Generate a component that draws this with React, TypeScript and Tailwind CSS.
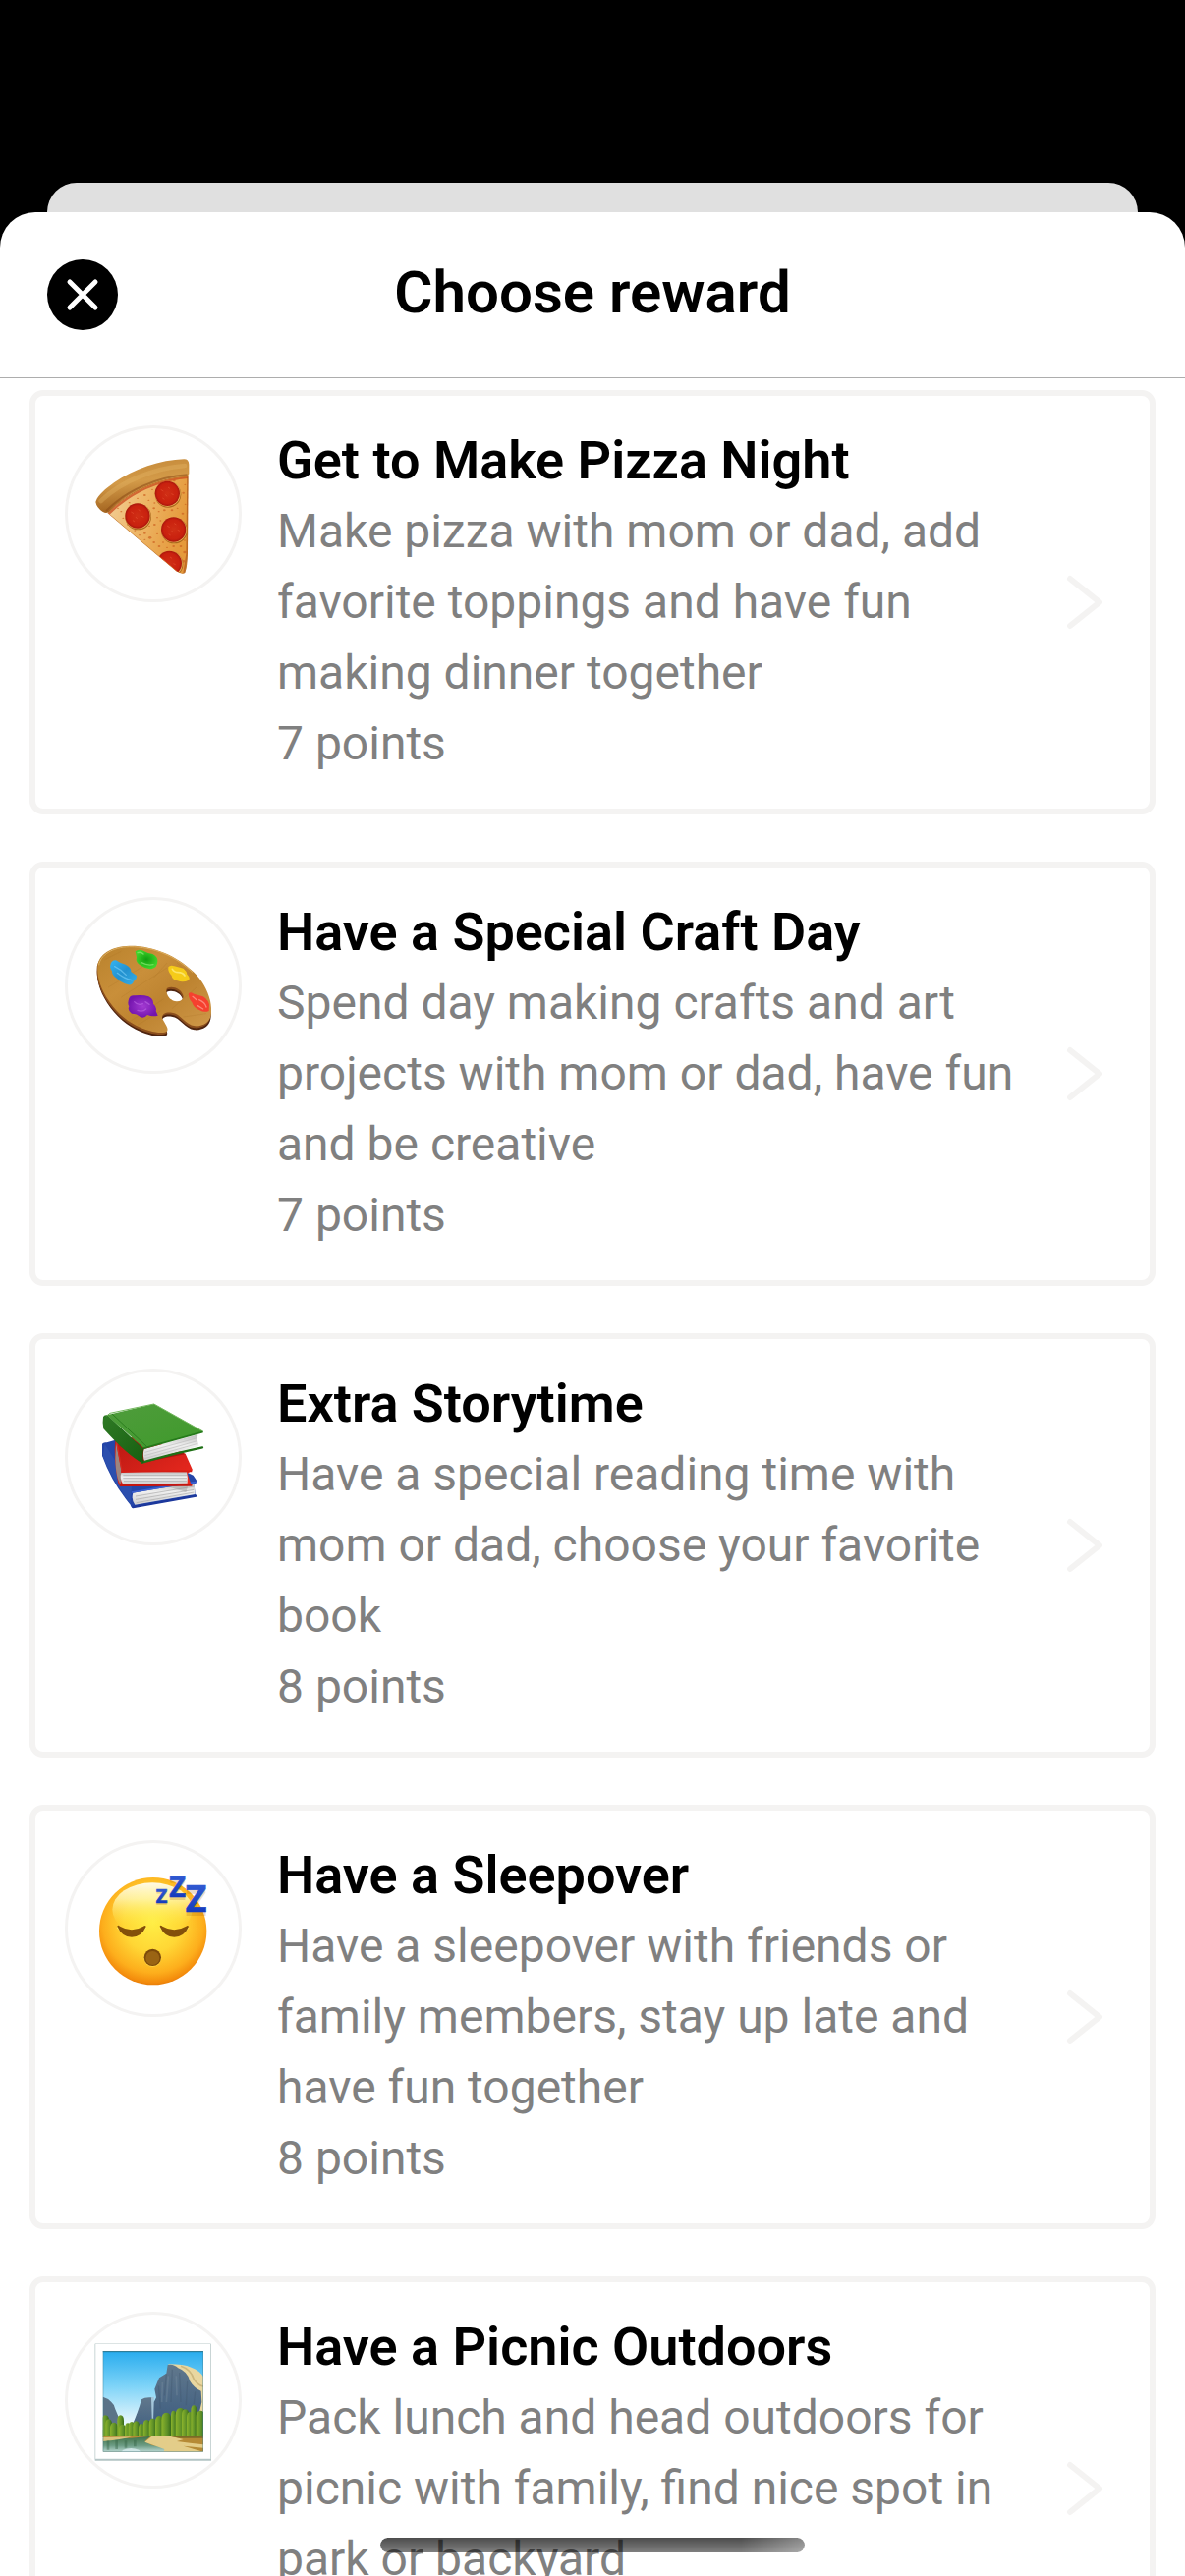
import type { ReactNode } from 'react';

const speckles: [number, number, number][] = [
  [285, 205, 3], [262, 222, 4], [274, 238, 3], [240, 232, 3], [215, 245, 3], [352, 178, 4], [385, 190, 3], [380, 215, 4],
  [290, 262, 4], [305, 272, 3], [322, 268, 4], [345, 268, 4], [362, 262, 3], [378, 278, 4], [300, 290, 3], [292, 312, 4],
  [310, 300, 3], [386, 250, 3], [262, 338, 4], [278, 352, 5], [290, 366, 4], [300, 340, 3], [318, 366, 3], [306, 378, 4],
  [262, 358, 3], [330, 382, 3], [350, 378, 4], [372, 378, 4], [384, 396, 5], [380, 424, 5], [376, 444, 3], [190, 272, 3],
  [196, 292, 3], [210, 312, 3], [232, 330, 3], [180, 262, 3], [292, 246, 3], [384, 360, 3], [246, 344, 3], [276, 316, 3],
];

const pepperoni: [number, number][] = [[331, 217], [240, 285], [350, 327], [337, 430]];

function PizzaArt() {
  return (
    <svg viewBox="27 18 522 522" className="size-full" aria-hidden="true">
      <defs>
        <linearGradient id="pz-cheese" x1="0" y1="0" x2="1" y2="0.3">
          <stop offset="0" stopColor="#f3d3a0" />
          <stop offset="0.5" stopColor="#eeb768" />
          <stop offset="1" stopColor="#e59a3c" />
        </linearGradient>
        <linearGradient id="pz-crust" x1="0.4" y1="0" x2="0.6" y2="1">
          <stop offset="0" stopColor="#c58a3a" />
          <stop offset="0.4" stopColor="#d39a48" />
          <stop offset="1" stopColor="#9a5a18" />
        </linearGradient>
        <radialGradient id="pz-pep">
          <stop offset="0" stopColor="#d03016" />
          <stop offset="0.8" stopColor="#c9210f" />
          <stop offset="1" stopColor="#a8160c" />
        </radialGradient>
        <clipPath id="pz-clip">
          <path d="M150 276C210 215 300 172 394 166L391 400Q390 440 383 458Q376 464 360 454Q260 370 150 276Z" />
        </clipPath>
      </defs>
      <path d="M148 276C210 210 300 168 395 162L393 400Q392 440 385 459Q376 465 358 454Q258 370 148 276Z" fill="#b8691f" />
      <g clipPath="url(#pz-clip)">
        <rect x="140" y="160" width="252" height="310" fill="url(#pz-cheese)" />
        <path d="M150 280C215 215 300 176 394 167" fill="none" stroke="#c84a1c" strokeWidth="8" opacity="0.75" />
        <path d="M394 165L391 400L382 460" fill="none" stroke="#a94c18" strokeWidth="6" opacity="0.6" />
        {speckles.map(([x, y, r]) => (
          <ellipse key={`${x}-${y}`} cx={x} cy={y} rx={r} ry={r - 1} fill="#cd6423" opacity="0.75" />
        ))}
        {pepperoni.map(([x, y]) => (
          <g key={x}>
            <circle cx={x + 2} cy={y + 3} r="40" fill="#a9681d" />
            <circle cx={x + 1} cy={y + 1} r="39" fill="#efb65c" />
            <circle cx={x} cy={y} r="38" fill="url(#pz-pep)" />
            <path d={`M${x - 20} ${y - 12}l8 5m14 -12l6 4m-14 18l5 6m13 -8l7 3m-34 10l6 4`} stroke="#e65232" strokeWidth="3" opacity="0.6" />
          </g>
        ))}
      </g>
      <path d="M112 243C118 222 140 205 168 184C228 142 310 114 382 112Q396 112 397 128V156Q396 165 384 165C300 170 210 214 158 268Q148 281 133 272Q115 260 112 243Z" fill="url(#pz-crust)" />
      <path d="M128 240C192 178 290 140 384 132" fill="none" stroke="#e6b768" strokeWidth="14" opacity="0.35" strokeLinecap="round" />
      <path d="M144 270C205 208 300 166 392 160" fill="none" stroke="#8b4a15" strokeWidth="6" opacity="0.55" />
    </svg>
  );
}

function PaletteArt() {
  const board =
    'M118 235C120 200 160 174 215 173C290 172 360 204 410 252C452 292 470 345 464 385C460 408 438 420 415 418C385 414 372 380 345 377C325 374 312 382 316 396C324 412 336 424 330 434C316 444 270 434 235 416C170 384 112 300 118 235ZM328 308C328 325 342 343 360 343C374 343 382 334 379 324C374 308 358 299 343 299C333 299 328 302 328 308Z';
  return (
    <svg viewBox="27 33 522 522" className="size-full" aria-hidden="true">
      <defs>
        <linearGradient id="pl-wood" x1="0" y1="0" x2="1" y2="1">
          <stop offset="0" stopColor="#b9822c" />
          <stop offset="0.35" stopColor="#c98f3a" />
          <stop offset="0.6" stopColor="#bd8330" />
          <stop offset="1" stopColor="#d19a4b" />
        </linearGradient>
        <linearGradient id="pl-blue" x1="0" y1="0" x2="1" y2="1">
          <stop offset="0" stopColor="#34b4f2" />
          <stop offset="0.5" stopColor="#2391cf" />
          <stop offset="1" stopColor="#37b0e8" />
        </linearGradient>
        <radialGradient id="pl-green">
          <stop offset="0" stopColor="#109e10" />
          <stop offset="1" stopColor="#3fd32b" />
        </radialGradient>
        <radialGradient id="pl-purple">
          <stop offset="0" stopColor="#a33ad2" />
          <stop offset="1" stopColor="#7415ae" />
        </radialGradient>
      </defs>
      <path d={board} fill="#4e2410" fillRule="evenodd" transform="translate(-1 12)" />
      <path d={board} fill="#8a4d1c" fillRule="evenodd" transform="translate(-2 6)" />
      <path d={board} fill="url(#pl-wood)" fillRule="evenodd" />
      <g stroke="#a56e22" strokeWidth="2" opacity="0.3" fill="none">
        <path d="M140 215L190 190M150 300L300 210M190 330L330 240M215 405L320 335M240 415L310 372M290 270L330 225M345 365L420 300M380 390L450 380M400 260L360 225" />
      </g>
      <path d="M122 232C126 202 162 177 215 176C290 175 358 206 408 254" fill="none" stroke="#dcae62" strokeWidth="3" />
      <path d="M157 232Q160 216 174 217Q186 226 203 230Q222 240 220 252L237 264Q238 276 228 281Q224 294 212 292Q190 286 178 274Q160 262 162 250Q154 240 157 232Z" fill="url(#pl-blue)" />
      <path d="M170 236Q190 246 205 262M178 256Q200 274 222 278" fill="none" stroke="#8bdcff" strokeWidth="4" opacity="0.5" strokeLinecap="round" />
      <path d="M233 190Q242 182 254 187Q270 196 286 198Q302 206 301 220Q300 240 284 243Q268 246 250 233Q232 224 237 208Z" fill="url(#pl-green)" />
      <path d="M240 194Q250 190 258 198M252 224Q270 234 288 230" fill="none" stroke="#99f280" strokeWidth="4" opacity="0.6" strokeLinecap="round" />
      <path d="M334 238Q340 230 352 235L380 242Q390 250 391 260Q402 270 396 278Q380 286 362 280Q344 276 344 264Q332 252 334 238Z" fill="#f5cb19" />
      <path d="M346 244Q352 254 364 254Q378 254 384 264" fill="none" stroke="#fff08a" strokeWidth="5" opacity="0.7" strokeLinecap="round" />
      <path d="M396 318Q404 312 412 320L440 328Q456 338 459 352L458 372Q444 378 430 370Q412 364 406 346Q394 332 396 318Z" fill="#f5402f" />
      <path d="M408 328L420 338M428 338Q446 346 450 360M424 356L440 366" fill="none" stroke="#ffa294" strokeWidth="4" opacity="0.7" strokeLinecap="round" />
      <path d="M214 334Q218 322 232 325Q256 322 274 328Q290 336 288 350Q300 360 296 372L302 386Q286 390 270 384Q260 396 248 390Q238 380 222 380Q208 370 214 358Q208 348 214 334Z" fill="url(#pl-purple)" />
      <path d="M230 344Q240 356 256 350M264 344L276 352M240 370Q256 376 266 366" fill="none" stroke="#cc7df0" strokeWidth="4" opacity="0.45" strokeLinecap="round" />
    </svg>
  );
}

function BooksArt() {
  return (
    <svg viewBox="27 33 522 522" className="size-full" aria-hidden="true">
      <defs>
        <linearGradient id="bk-green" x1="0" y1="0" x2="1" y2="1">
          <stop offset="0" stopColor="#4f9c3c" />
          <stop offset="1" stopColor="#3f9a2b" />
        </linearGradient>
        <linearGradient id="bk-spine" x1="0" y1="0" x2="1" y2="1">
          <stop offset="0" stopColor="#2f7a25" />
          <stop offset="1" stopColor="#175f10" />
        </linearGradient>
        <linearGradient id="bk-red" x1="0" y1="0" x2="1" y2="1">
          <stop offset="0" stopColor="#b81812" />
          <stop offset="1" stopColor="#ee2a20" />
        </linearGradient>
        <linearGradient id="bk-page" x1="0" y1="0" x2="0" y2="1">
          <stop offset="0" stopColor="#bdbdbd" />
          <stop offset="0.4" stopColor="#efefef" />
          <stop offset="1" stopColor="#cfcfcf" />
        </linearGradient>
      </defs>
      <path d="M132 254Q136 248 146 250L180 240L410 350L423 370L412 378L418 414L232 448Q222 454 218 440Q160 370 132 290Z" fill="#2445a8" />
      <path d="M140 256L222 384L218 438Q160 360 134 292Z" fill="#2c4fae" />
      <path d="M226 404Q300 390 412 374Q416 394 416 408L232 440Q220 424 226 404Z" fill="url(#bk-page)" />
      <path d="M234 414L412 384M234 424L412 394M236 434L412 402" stroke="#a9a9a9" strokeWidth="2" />
      <path d="M222 402L330 384L422 370" stroke="#3b5fd0" strokeWidth="5" fill="none" />
      <path d="M226 447L418 413" stroke="#1c389c" strokeWidth="7" strokeLinecap="round" />
      <path d="M330 384L396 374L388 402Z" fill="#888" opacity="0.35" />
      <path d="M172 240L260 230L386 284L408 334L392 344L404 380L192 383Q182 384 180 370Q166 300 172 240Z" fill="url(#bk-red)" />
      <path d="M174 248L190 334L188 378Q174 360 172 300Z" fill="#9c8580" />
      <path d="M176 248L192 336" stroke="#d32a20" strokeWidth="4" />
      <path d="M190 342Q280 338 390 340Q394 358 392 374L196 378Q184 362 190 342Z" fill="url(#bk-page)" />
      <path d="M196 350H390M196 359H390M198 368H390" stroke="#a5a5a5" strokeWidth="2" />
      <path d="M190 338L406 337" stroke="#d51d15" strokeWidth="5" />
      <path d="M188 381L404 380" stroke="#c51610" strokeWidth="6" strokeLinecap="round" />
      <path d="M184 258L252 312L384 286L376 276L200 240Z" fill="#7b0d0a" opacity="0.55" />
      <path d="M135 172Q138 164 148 166L254 266Q248 290 256 314Q210 290 136 208Q132 190 135 172Z" fill="url(#bk-spine)" />
      <path d="M146 166L290 132L440 216L260 268Z" fill="url(#bk-green)" />
      <path d="M146 168L156 160L290 132L440 216" fill="none" stroke="#72b65c" strokeWidth="3" />
      <path d="M162 162L268 262" stroke="#2b7d1f" strokeWidth="3" />
      <path d="M260 270L424 226Q420 244 428 260L262 308Q254 290 260 270Z" fill="url(#bk-page)" />
      <path d="M262 280L422 236M262 290L422 245M262 299L424 253" stroke="#bcbcbc" strokeWidth="2" />
      <path d="M256 268L438 218" stroke="#257a1a" strokeWidth="5" strokeLinecap="round" />
      <path d="M254 311Q340 286 438 265" fill="none" stroke="#1f7016" strokeWidth="7" strokeLinecap="round" />
      <path d="M257 268Q250 290 257 312" fill="none" stroke="#185f10" strokeWidth="5" />
    </svg>
  );
}

function SleepingArt() {
  return (
    <svg viewBox="27 33 522 522" className="size-full" aria-hidden="true">
      <defs>
        <radialGradient id="sl-face" cx="0.5" cy="0.42" r="0.6">
          <stop offset="0" stopColor="#ffee45" />
          <stop offset="0.45" stopColor="#ffd735" />
          <stop offset="0.78" stopColor="#fdae1c" />
          <stop offset="0.93" stopColor="#f38b0c" />
          <stop offset="1" stopColor="#dd7206" />
        </radialGradient>
        <linearGradient id="sl-shine" x1="0" y1="0" x2="0" y2="1">
          <stop offset="0" stopColor="#fffdf0" stopOpacity="0.95" />
          <stop offset="0.3" stopColor="#fffbc0" stopOpacity="0.75" />
          <stop offset="0.8" stopColor="#fff24a" stopOpacity="0" />
        </linearGradient>
        <linearGradient id="sl-z" x1="0" y1="0" x2="0" y2="1">
          <stop offset="0" stopColor="#3e68dc" />
          <stop offset="1" stopColor="#0a2fb4" />
        </linearGradient>
      </defs>
      <circle cx="287" cy="302" r="164" fill="url(#sl-face)" />
      <ellipse cx="285" cy="236" rx="122" ry="82" fill="url(#sl-shine)" />
      <path d="M178 290Q222 342 266 290" fill="none" stroke="#ffe860" strokeWidth="5" />
      <path d="M308 290Q352 342 396 290" fill="none" stroke="#ffe860" strokeWidth="5" />
      <path d="M178 287Q180 282 186 287Q222 308 258 287Q264 282 266 288Q252 320 222 320Q192 320 178 287Z" fill="#83500a" />
      <path d="M308 287Q310 282 316 287Q352 308 388 287Q394 282 396 288Q382 320 352 320Q322 320 308 287Z" fill="#83500a" />
      <circle cx="286" cy="384" r="27" fill="#ffd243" />
      <circle cx="286" cy="382" r="26" fill="#7d4a0a" />
      <circle cx="286" cy="384" r="21" fill="#9a6413" />
      <g fontFamily="Noto Sans, sans-serif" fontWeight="700">
        <g fill="#a05a00" opacity="0.22">
          <text x="296" y="223" fontSize="60">Z</text>
          <text x="337" y="206" fontSize="87">Z</text>
          <text x="386" y="256" fontSize="112">Z</text>
        </g>
        <g fill="url(#sl-z)" stroke="url(#sl-z)" strokeWidth="2">
          <text x="296" y="215" fontSize="60">Z</text>
          <text x="337" y="197" fontSize="87">Z</text>
          <text x="386" y="243" fontSize="112">Z</text>
        </g>
      </g>
    </svg>
  );
}

const trees: [number, number, number][] = [
  [142, 340, 11], [152, 352, 10], [168, 362, 12], [188, 340, 10], [194, 368, 11], [210, 364, 9], [222, 360, 10], [236, 358, 10],
  [252, 366, 9], [268, 354, 11], [286, 350, 11], [306, 342, 12], [328, 332, 15], [350, 326, 8], [371, 318, 15], [386, 322, 11],
  [400, 330, 10], [412, 310, 9], [432, 326, 13],
];

function ParkArt() {
  return (
    <svg viewBox="27 33 522 522" className="size-full" aria-hidden="true">
      <defs>
        <linearGradient id="pk-sky" x1="0" y1="0" x2="0" y2="1">
          <stop offset="0" stopColor="#28acee" />
          <stop offset="0.35" stopColor="#7fd4f8" />
          <stop offset="0.7" stopColor="#e5f6fc" />
        </linearGradient>
        <linearGradient id="pk-rock" x1="0" y1="0" x2="0" y2="1">
          <stop offset="0" stopColor="#61788c" />
          <stop offset="1" stopColor="#3d5d80" />
        </linearGradient>
        <linearGradient id="pk-tree" x1="0" y1="0" x2="1" y2="0">
          <stop offset="0" stopColor="#8cb42c" />
          <stop offset="0.6" stopColor="#5d8f27" />
          <stop offset="1" stopColor="#356819" />
        </linearGradient>
        <linearGradient id="pk-water" x1="0" y1="0" x2="0" y2="1">
          <stop offset="0" stopColor="#3f7045" />
          <stop offset="0.6" stopColor="#6c9c84" />
          <stop offset="1" stopColor="#b7d6d0" />
        </linearGradient>
        <clipPath id="pk-clip">
          <rect x="134" y="145" width="307" height="307" rx="2" />
        </clipPath>
      </defs>
      <rect x="110" y="123" width="355" height="356" fill="#a9bcbd" />
      <rect x="111" y="122" width="352" height="352" fill="#ffffff" stroke="#cbd7d7" strokeWidth="2" />
      <g clipPath="url(#pk-clip)">
        <rect x="134" y="145" width="307" height="307" fill="url(#pk-sky)" />
        <path d="M134 284Q150 288 160 300Q170 308 172 322L184 350V400H134Z" fill="#5b7388" />
        <path d="M222 374Q242 330 252 292Q262 284 284 286L290 400H222Z" fill="url(#pk-rock)" />
        <path d="M282 286L290 284L292 350H284Z" fill="#a5c6da" />
        <path d="M334 184Q380 184 404 194Q430 204 441 222V340H400Z" fill="#e9d7a0" />
        <path d="M372 190Q402 200 412 230Q424 248 441 252" fill="none" stroke="#cdb77d" strokeWidth="5" />
        <path d="M288 360L290 300L297 286L292 260Q300 240 306 226L328 212L332 186Q350 182 364 196Q392 206 400 236Q412 256 434 266L436 300L420 370Z" fill="url(#pk-rock)" />
        <path d="M328 214L322 280M346 200L342 300M368 210L372 300M392 236L388 310M304 250L310 320M416 268L412 306" stroke="#40566e" strokeWidth="4" opacity="0.35" />
        <path d="M334 220L328 300M358 220L360 280M316 240L314 300" stroke="#8297a8" strokeWidth="5" opacity="0.3" />
        <rect x="134" y="384" width="307" height="24" fill="#37621f" />
        {trees.map(([x, y, r]) => (
          <path key={x} d={`M${x - r} 408V${y + r + 8}Q${x - r} ${y} ${x} ${y}Q${x + r} ${y} ${x + r} ${y + r + 8}V408Z`} fill="url(#pk-tree)" />
        ))}
        <rect x="134" y="402" width="307" height="50" fill="#b58a35" />
        <path d="M134 410H220L280 404L262 420L284 432L330 440L330 452H134Z" fill="url(#pk-water)" />
        <path d="M134 408L222 406Q200 414 134 420Z" fill="#d9c27e" />
        <path d="M284 404L330 402L380 414L360 420Q400 426 441 430V440L380 434L441 452H320L322 444L262 422Z" fill="#e3cd89" />
        <path d="M150 418V446M176 416V444M204 418V440M232 416V436" stroke="#315f41" strokeWidth="8" opacity="0.4" />
        <path d="M196 446Q220 436 244 446L250 452H190Z" fill="#dbeef0" opacity="0.8" />
        <path d="M330 403H441V410H370Z" fill="#7c6a26" />
      </g>
      <rect x="135" y="146" width="305" height="305" fill="none" stroke="#407c8c" strokeWidth="2" opacity="0.6" />
      <path d="M134 146H441" stroke="#24748f" strokeWidth="3" />
    </svg>
  );
}

interface Reward {
  title: string;
  description: string;
  points: number;
  art: ReactNode;
}

const rewards: Reward[] = [
  {
    title: 'Get to Make Pizza Night',
    description: 'Make pizza with mom or dad, add favorite toppings and have fun making dinner together',
    points: 7,
    art: <PizzaArt />,
  },
  {
    title: 'Have a Special Craft Day',
    description: 'Spend day making crafts and art projects with mom or dad, have fun and be creative',
    points: 7,
    art: <PaletteArt />,
  },
  {
    title: 'Extra Storytime',
    description: 'Have a special reading time with mom or dad, choose your favorite book',
    points: 8,
    art: <BooksArt />,
  },
  {
    title: 'Have a Sleepover',
    description: 'Have a sleepover with friends or family members, stay up late and have fun together',
    points: 8,
    art: <SleepingArt />,
  },
  {
    title: 'Have a Picnic Outdoors',
    description: 'Pack lunch and head outdoors for picnic with family, find nice spot in park or backyard',
    points: 8,
    art: <ParkArt />,
  },
];

function RewardCard({ reward }: { reward: Reward }) {
  return (
    <li>
      <button
        type="button"
        className="flex w-full items-start rounded-[14px] border-6 border-[#f4f3f2] bg-white p-[30px] text-left"
      >
        <span className="size-[180px] shrink-0 overflow-hidden rounded-full border-3 border-[#f4f3f2]">{reward.art}</span>
        <span className="ml-9 mr-6 min-w-0 flex-1 text-[48px] leading-[72px] text-[#808080]">
          <span className="block text-[54px] font-semibold leading-[72px] text-black">{reward.title}</span>
          <span className="block">{reward.description}</span>
          <span className="block">{reward.points} points</span>
        </span>
        <svg viewBox="0 0 72 72" className="size-[72px] shrink-0 self-center" fill="none" aria-hidden="true">
          <path d="M21 12L51 36L21 60" stroke="#f4f3f2" strokeWidth="6" strokeLinecap="round" strokeLinejoin="round" />
        </svg>
      </button>
    </li>
  );
}

export default function App() {
  return (
    <div className="flex h-screen flex-col overflow-hidden bg-black pt-[186px] font-['Roboto',sans-serif]">
      <div className="mx-12 h-[30px] shrink-0 rounded-t-[30px] bg-[#e0e0e0]" />
      <main className="flex min-h-0 flex-1 flex-col overflow-hidden rounded-t-[36px] bg-white">
        <header className="grid shrink-0 grid-cols-[72px_1fr_72px] items-start border-b border-[#adadad] px-12 py-12">
          <button type="button" aria-label="Close" className="size-[72px] rounded-full bg-black">
            <svg viewBox="0 0 72 72" className="size-full" fill="none" aria-hidden="true">
              <path d="M23 23L49 49M49 23L23 49" stroke="#ffffff" strokeWidth="5" strokeLinecap="round" />
            </svg>
          </button>
          <h1 className="text-center text-[60px] font-semibold leading-[68px] text-black">Choose reward</h1>
        </header>
        <ul className="flex min-h-0 flex-1 flex-col gap-12 overflow-hidden px-[30px] pt-3">
          {rewards.map((reward) => (
            <RewardCard key={reward.title} reward={reward} />
          ))}
        </ul>
      </main>
      <div className="fixed bottom-6 left-1/2 h-[15px] w-[432px] -translate-x-1/2 rounded-full bg-linear-to-b from-black/70 to-black/50 mask-r-from-85% mask-r-to-130%" />
    </div>
  );
}
